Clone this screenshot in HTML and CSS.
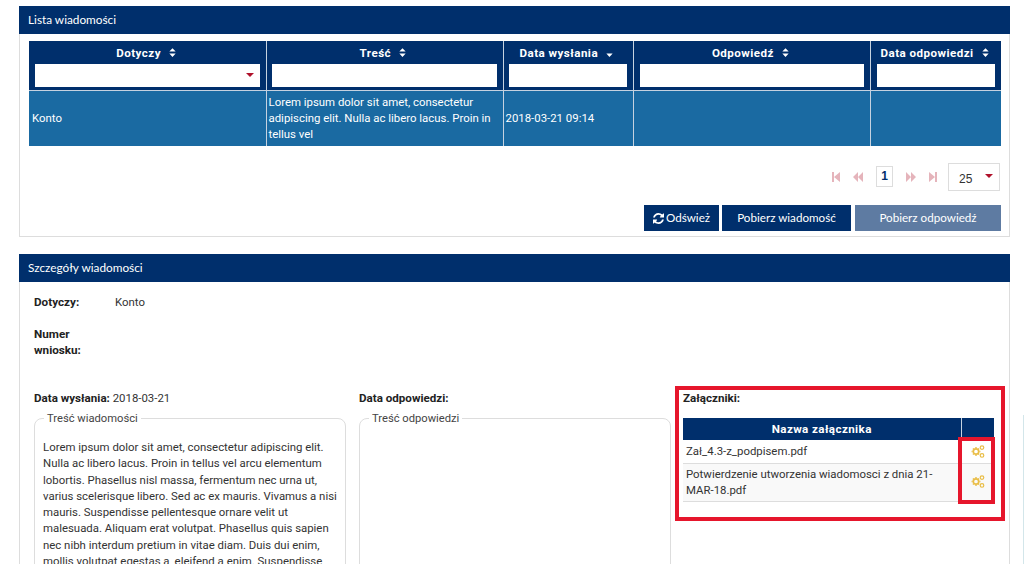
FILE: index.html
```html
<!DOCTYPE html>
<html lang="pl">
<head>
<meta charset="utf-8">
<title>Lista wiadomości</title>
<link rel="stylesheet" href="styles.css">
</head>
<body>
<svg class="defs" width="0" height="0" aria-hidden="true">
  <symbol id="sort" viewBox="0 0 8 10"><path d="M4 0l3.6 3.8H.4zM4 10L.4 6.2h7.2z"/></symbol>
  <symbol id="sortd" viewBox="0 0 8 10"><path d="M4 10L.4 6.2h7.2z"/></symbol>
  <symbol id="cogs" viewBox="0 0 14 13">
    <g fill="none" stroke="currentColor">
      <circle cx="5" cy="6.5" r="2.7" stroke-width="1.7"/>
      <path d="M5 2v1M5 10v1M.6 6.5h1M8.4 6.5h1M1.9 3.4l.8.8M7.3 8.8l.8.8M1.9 9.6l.8-.8M7.3 4.2l.8-.8" stroke-width="1.4"/>
      <circle cx="11" cy="2.6" r="1.8" stroke-width="1.2"/>
      <circle cx="11" cy="10.4" r="1.8" stroke-width="1.2"/>
    </g>
  </symbol>
</svg>
<main class="page">
  <section class="panel list-panel">
    <h2 class="panel-head">Lista wiadomości</h2>
    <div class="list-body">
      <table class="grid">
        <colgroup><col class="c1"><col class="c1"><col class="c2"><col class="c1"><col class="c3"></colgroup>
        <thead>
          <tr>
            <th><span class="th-label">Dotyczy <svg class="sort"><use href="#sort"/></svg></span>
              <div class="filter filter-select"><span class="caret"></span></div></th>
            <th><span class="th-label">Treść <svg class="sort"><use href="#sort"/></svg></span>
              <div class="filter"></div></th>
            <th><span class="th-label">Data wysłania <svg class="sort"><use href="#sortd"/></svg></span>
              <div class="filter"></div></th>
            <th><span class="th-label">Odpowiedź <svg class="sort"><use href="#sort"/></svg></span>
              <div class="filter"></div></th>
            <th><span class="th-label">Data odpowiedzi <svg class="sort"><use href="#sort"/></svg></span>
              <div class="filter"></div></th>
          </tr>
        </thead>
        <tbody>
          <tr>
            <td>Konto</td>
            <td>Lorem ipsum dolor sit amet, consectetur adipiscing elit. Nulla ac libero lacus. Proin in tellus vel</td>
            <td>2018-03-21 09:14</td>
            <td></td>
            <td></td>
          </tr>
        </tbody>
      </table>
      <div class="pager">
        <svg class="pg pg-first" viewBox="0 0 8 10"><path d="M0 0h2v10H0zM8 0v10L2 5z"/></svg>
        <svg class="pg pg-prev" viewBox="0 0 10 10"><path d="M5 0v10L0 5zM10 0v10L5 5z"/></svg>
        <span class="pg-num">1</span>
        <svg class="pg pg-next" viewBox="0 0 10 10"><path d="M0 0l5 5-5 5zM5 0l5 5-5 5z"/></svg>
        <svg class="pg pg-last" viewBox="0 0 8 10"><path d="M0 0l6 5-6 5zM6 0h2v10H6z"/></svg>
        <div class="pg-size"><span>25</span><span class="caret"></span></div>
      </div>
      <div class="actions">
        <button class="btn btn-refresh" type="button"><svg class="refresh" viewBox="0 0 1536 1536"><path d="M1511 928q0 5-1 7-64 268-268 434.5t-478 166.5q-146 0-282.5-55t-243.5-157l-129 129q-19 19-45 19t-45-19-19-45v-448q0-26 19-45t45-19h448q26 0 45 19t19 45-19 45l-137 137q71 66 161 102t187 36q134 0 250-65t186-179q11-17 53-117 8-23 30-23h192q13 0 22.5 9.5t9.5 22.5zm25-800v448q0 26-19 45t-45 19h-448q-26 0-45-19t-19-45 19-45l138-138q-148-137-349-137-134 0-250 65t-186 179q-11 17-53 117-8 23-30 23h-199q-13 0-22.5-9.5t-9.5-22.5v-7q65-268 270-434.5t480-166.5q146 0 284 55.5t245 156.5l130-129q19-19 45-19t45 19 19 45z"/></svg>Odśwież</button>
        <button class="btn btn-get" type="button">Pobierz wiadomość</button>
        <button class="btn btn-off" type="button">Pobierz odpowiedź</button>
      </div>
    </div>
  </section>

  <section class="panel detail-panel">
    <h2 class="panel-head">Szczegóły wiadomości</h2>
    <div class="detail-body">
      <div class="field"><b class="field-label">Dotyczy:</b><span>Konto</span></div>
      <div class="field field-num"><b class="field-label">Numer wniosku:</b></div>
      <div class="columns">
        <div class="col">
          <p class="col-title"><b>Data wysłania:</b> 2018-03-21</p>
          <fieldset class="box">
            <legend>Treść wiadomości</legend>
            <p>Lorem ipsum dolor sit amet, consectetur adipiscing elit. Nulla ac libero lacus. Proin in tellus vel arcu elementum lobortis. Phasellus nisl massa, fermentum nec urna ut, varius scelerisque libero. Sed ac ex mauris. Vivamus a nisi mauris. Suspendisse pellentesque ornare velit ut malesuada. Aliquam erat volutpat. Phasellus quis sapien nec nibh interdum pretium in vitae diam. Duis dui enim, mollis volutpat egestas a, eleifend a enim. Suspendisse</p>
          </fieldset>
        </div>
        <div class="col">
          <p class="col-title"><b>Data odpowiedzi:</b></p>
          <fieldset class="box box-empty">
            <legend>Treść odpowiedzi</legend>
          </fieldset>
        </div>
        <div class="col col-att">
          <p class="col-title"><b>Załączniki:</b></p>
          <table class="att">
            <colgroup><col><col class="att-icon-col"></colgroup>
            <thead><tr><th>Nazwa załącznika</th><th></th></tr></thead>
            <tbody>
              <tr><td>Zał_4.3-z_podpisem.pdf</td><td class="att-icon"><svg class="cogs"><use href="#cogs"/></svg></td></tr>
              <tr class="odd"><td>Potwierdzenie utworzenia wiadomosci z dnia 21-MAR-18.pdf</td><td class="att-icon"><svg class="cogs"><use href="#cogs"/></svg></td></tr>
            </tbody>
          </table>
          <div class="mark mark-outer"></div>
          <div class="mark mark-icons"></div>
        </div>
      </div>
    </div>
  </section>
</main>
<div class="edge-line"></div>
</body>
</html>
```

FILE: styles.css
```css
* { box-sizing: border-box; }
html, body { margin: 0; height: 564px; overflow: hidden; background: #fff; }
body { position: relative; font: 11.4px/16.25px Roboto, "Liberation Sans", sans-serif; color: #333; }
.defs { position: absolute; }
.edge-line { position: absolute; right: 0; top: 415px; bottom: 0; width: 1px; background: #d3e6ea; }
.page { padding: 6px 14px 0 19px; }
.panel { border: 1px solid #ddd; border-top: 0; }
.panel-head { margin: 0 -1px; height: 28px; padding: 0 9px; background: #002f6c; color: #fff; font: 400 11.8px/28px Lato, Roboto, sans-serif; }
.list-panel { height: 231px; }
.detail-panel { margin-top: 17px; }

.list-body { padding: 7px 8px 0 9px; }
.grid { width: 972px; border-collapse: collapse; table-layout: fixed; }
.c1 { width: 237px; }
.c2 { width: 130px; }
.c3 { width: 131px; }
.grid th { height: 49px; padding: 4px 6px 3px 6px; background: #002f6c; color: #fff; font-size: 11.6px; font-weight: 700; letter-spacing: .45px; line-height: 16px; text-align: center; vertical-align: top; border-left: 1px solid #c6d2e0; border-bottom: 1px solid #c6d2e0; }
.grid th:first-child, .grid td:first-child { border-left: 0; }
.grid th:nth-child(2), .grid th:nth-child(3) { padding-left: 5px; }
.th-label { display: block; padding-right: 2px; white-space: nowrap; }
.sort { width: 7px; height: 9px; margin-left: 5px; fill: #fff; }
.filter { position: relative; height: 23px; margin-top: 3px; background: #fff; }
.grid td { height: 55px; padding: 0 3px; background: #1a6aa2; color: #fff; line-height: 16.25px; border-left: 1px solid #c6d2e0; vertical-align: middle; }
.grid td + td { padding-left: 2px; }
.caret { border-left: 4px solid transparent; border-right: 4px solid transparent; border-top: 4px solid #b0112b; }
.filter-select .caret { position: absolute; right: 6px; top: 9px; }

.pager { display: flex; align-items: center; justify-content: flex-end; height: 29px; margin-top: 17px; padding-right: 1px; }
.pg { fill: #e5b4bb; height: 10px; }
.pg-first, .pg-last { width: 8px; }
.pg-prev, .pg-next { width: 10px; }
.pg-first { margin-right: 13px; }
.pg-prev { margin-right: 13px; }
.pg-next { margin-left: 13px; margin-right: 13px; }
.pg-last { margin-right: 11px; }
.pg-num { width: 17px; height: 21px; margin-bottom: 2px; border: 1px solid #ddd; color: #002f6c; font: 700 12px/19px "Liberation Sans", sans-serif; text-align: center; }
.pg-size { display: flex; align-items: center; justify-content: space-between; width: 52px; height: 28px; padding: 3px 6px 0 10px; border: 1px solid #ddd; font: 12px "Liberation Sans", sans-serif; color: #333; }
.pg-size .caret { margin-bottom: 6px; }

.actions { display: flex; justify-content: flex-end; gap: 3px; margin-top: 13px; }
.btn { height: 26px; padding: 0; border: 0; background: #002f6c; color: #fff; font: 400 11.65px/26px Lato, sans-serif; }
.btn-refresh { width: 75px; }
.btn-get { width: 129px; }
.btn-off { width: 146px; margin-left: 1px; background: #5e7ba2; }
.refresh { width: 11px; height: 11px; margin-right: 2px; fill: #fff; vertical-align: -2px; }

.detail-body { padding: 12px 15px 0 14px; }
.field { display: flex; line-height: 16px; }
.field-label { flex: none; width: 81px; color: #222; font-size: 11.7px; }
.field-num { margin-top: 16px; height: 48px; }
.field-num .field-label { width: 60px; }
.columns { display: grid; grid-template-columns: 312px 312px 312px; column-gap: 13px; margin-top: 16px; }
.col { position: relative; }
.col-att { margin-left: -1px; }
.col-title { margin: 0; line-height: 16px; }
.col-title b { color: #222; font-size: 11.6px; }
.box { margin: 3px 0 0; padding: 0 8px; height: 300px; min-width: 0; border: 1px solid #ddd; border-radius: 8px; }
.box legend { padding: 2px 3px 0; margin-left: 1px; color: #444; line-height: 16px; font-size: 11.2px; }
.box p { margin: 12px 0 0; line-height: 16.25px; }

.att { width: 311px; margin-top: 12px; border-collapse: collapse; table-layout: fixed; }
.att-icon-col { width: 33px; }
.att th { height: 22px; padding: 0; background: #002f6c; color: #fff; font-size: 11.6px; font-weight: 700; letter-spacing: .4px; text-align: center; border-left: 1px solid #c6d2e0; }
.att th:first-child { border-left: 0; }
.att td { padding: 3px; height: 23px; border-bottom: 1px solid #ddd; line-height: 16.25px; }
.att .odd td { padding-top: 2px; background: #f9f9f9; }
.att-icon { text-align: center; vertical-align: middle; }
.cogs { display: block; width: 14px; height: 13px; margin: 0 auto; color: #e9bd45; }

.mark { position: absolute; border: 4px solid #e6162c; pointer-events: none; }
.mark-outer { left: -8px; top: -4px; width: 330px; height: 135px; }
.mark-icons { left: 275px; top: 47px; width: 37px; height: 67px; }
```
